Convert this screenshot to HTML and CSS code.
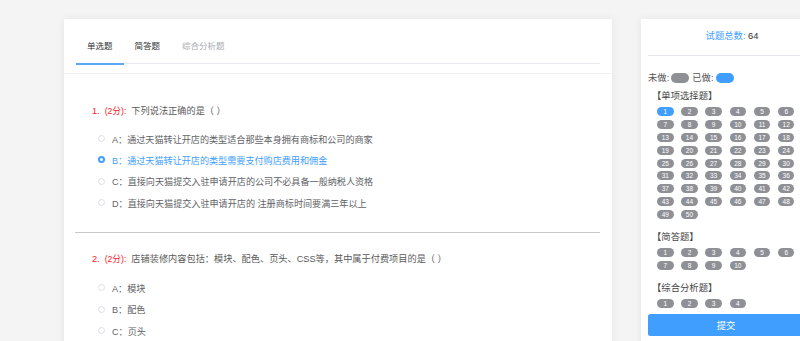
FILE: index.html
```html
<!DOCTYPE html>
<html lang="zh-CN">
<head>
<meta charset="utf-8">
<title>考试</title>
<link rel="stylesheet" href="styles.css">
</head>
<body>
<div class="page">
  <main class="paper">
    <div class="tabs-head">
      <div class="tabs-nav">
        <div class="tab active">单选题</div>
        <div class="tab">简答题</div>
        <div class="tab muted">综合分析题</div>
      </div>
    </div>

    <section class="question q1">
      <div class="q-title"><span class="q-no">1.</span><span class="q-score">(2分):</span><span class="q-text">下列说法正确的是（ ）</span></div>
      <ul class="options">
        <li class="option"><span class="radio"></span><span>A：通过天猫转让开店的类型适合那些本身拥有商标和公司的商家</span></li>
        <li class="option checked"><span class="radio"></span><span>B：通过天猫转让开店的类型需要支付购店费用和佣金</span></li>
        <li class="option"><span class="radio"></span><span>C：直接向天猫提交入驻申请开店的公司不必具备一般纳税人资格</span></li>
        <li class="option"><span class="radio"></span><span>D：直接向天猫提交入驻申请开店的 注册商标时间要满三年以上</span></li>
      </ul>
    </section>

    <hr class="divider">

    <section class="question q2">
      <div class="q-title"><span class="q-no">2.</span><span class="q-score">(2分):</span><span class="q-text">店铺装修内容包括：模块、配色、页头、CSS等，其中属于付费项目的是（ ）</span></div>
      <ul class="options">
        <li class="option"><span class="radio"></span><span>A：模块</span></li>
        <li class="option"><span class="radio"></span><span>B：配色</span></li>
        <li class="option"><span class="radio"></span><span>C：页头</span></li>
      </ul>
    </section>
  </main>

  <aside class="panel">
    <div class="panel-title"><span class="blue">试题总数:</span> 64</div>
    <div class="legend"><span>未做:</span><span class="dot grey"></span><span>已做:</span><span class="dot blue-bg"></span></div>

    <div class="group">
      <div class="group-title">【单项选择题】</div>
      <div class="pills">
        <span class="pill done">1</span><span class="pill">2</span><span class="pill">3</span><span class="pill">4</span><span class="pill">5</span><span class="pill">6</span>
        <span class="pill">7</span><span class="pill">8</span><span class="pill">9</span><span class="pill">10</span><span class="pill">11</span><span class="pill">12</span>
        <span class="pill">13</span><span class="pill">14</span><span class="pill">15</span><span class="pill">16</span><span class="pill">17</span><span class="pill">18</span>
        <span class="pill">19</span><span class="pill">20</span><span class="pill">21</span><span class="pill">22</span><span class="pill">23</span><span class="pill">24</span>
        <span class="pill">25</span><span class="pill">26</span><span class="pill">27</span><span class="pill">28</span><span class="pill">29</span><span class="pill">30</span>
        <span class="pill">31</span><span class="pill">32</span><span class="pill">33</span><span class="pill">34</span><span class="pill">35</span><span class="pill">36</span>
        <span class="pill">37</span><span class="pill">38</span><span class="pill">39</span><span class="pill">40</span><span class="pill">41</span><span class="pill">42</span>
        <span class="pill">43</span><span class="pill">44</span><span class="pill">45</span><span class="pill">46</span><span class="pill">47</span><span class="pill">48</span>
        <span class="pill">49</span><span class="pill">50</span>
      </div>
    </div>

    <div class="group">
      <div class="group-title">【简答题】</div>
      <div class="pills">
        <span class="pill">1</span><span class="pill">2</span><span class="pill">3</span><span class="pill">4</span><span class="pill">5</span><span class="pill">6</span>
        <span class="pill">7</span><span class="pill">8</span><span class="pill">9</span><span class="pill">10</span>
      </div>
    </div>

    <div class="group">
      <div class="group-title">【综合分析题】</div>
      <div class="pills">
        <span class="pill">1</span><span class="pill">2</span><span class="pill">3</span><span class="pill">4</span>
      </div>
    </div>

    <button class="submit" type="button">提交</button>
  </aside>
</div>
</body>
</html>
```

FILE: styles.css
```css
* { box-sizing: border-box; }

html, body {
  margin: 0;
  padding: 0;
  background: #f4f4f5;
  font-family: "Liberation Sans", "Noto Sans CJK SC", sans-serif;
  overflow: hidden;
}

.page {
  display: flex;
  align-items: flex-start;
  gap: 29px;
  padding: 19px 0 0 64px;
  width: 900px;
  height: 341px;
  overflow: hidden;
}

/* ---------- left paper ---------- */
.paper {
  width: 548px;
  height: 340px;
  background: #fff;
  box-shadow: 0 0 8px rgba(0, 0, 0, 0.07);
}

.tabs-head {
  padding: 0 12px;
  height: 55px;
  border-bottom: 1px solid #f1f1f4;
}

.tabs-nav {
  display: flex;
  height: 45px;
  border-bottom: 1px solid #e7e9ee;
}

.tab {
  position: relative;
  padding: 20px 11px 0;
  font-size: 8.5px;
  line-height: 14px;
  color: #303133;
  height: 45px;
}

.tab.muted { color: #a8abb2; }

.tab.active::after {
  content: "";
  position: absolute;
  left: 0;
  right: 0;
  bottom: -1px;
  height: 2px;
  background: #5ba8f6;
}

.question {
  padding-left: 28px;
}

.q1 { padding-top: 30px; }
.q2 { padding-top: 19px; }

.q-title {
  font-size: 9.2px;
  line-height: 14px;
  color: #5a5a5a;
}

.q-no, .q-score {
  color: #f5222d;
  margin-right: 5px;
}

.q-score { font-size: 8.67px; }

.options {
  list-style: none;
  margin: 10px 0 0;
  padding: 0 0 0 6px;
}

.q2 .options { margin-top: 11px; }

.option {
  display: flex;
  align-items: center;
  height: 21.33px;
  font-size: 9.1px;
  color: #606266;
}

.radio {
  width: 7px;
  height: 7px;
  border: 1px solid #dcdfe6;
  border-radius: 50%;
  margin-right: 7px;
  flex: none;
  background: #fff;
}

.option.checked { color: #409eff; }

.option.checked .radio {
  border: 2.3px solid #409eff;
  background: #fff;
}

.divider {
  margin: 19px 12px 0 11px;
  border: 0;
  border-top: 1px solid #c9c9c9;
  height: 0;
}

/* ---------- right panel ---------- */
.panel {
  width: 172px;
  height: 340px;
  background: #fff;
  box-shadow: 0 0 8px rgba(0, 0, 0, 0.07);
  padding: 0 7px;
}

.panel-title {
  text-align: center;
  font-size: 9.33px;
  line-height: 14px;
  color: #333;
  padding: 10px 0 12px 0;
  border-bottom: 1px solid #e2e4e9;
  margin-right: -10px;
}

.panel-title .blue { color: #409eff; }

.legend {
  margin-top: 17px;
  font-size: 9.33px;
  line-height: 10px;
  height: 10px;
  color: #555;
  display: flex;
  align-items: center;
}

.dot {
  display: inline-block;
  width: 18px;
  height: 9.3px;
  border-radius: 5px;
  margin: 0 3px 0 2px;
}

.dot.grey { background: #8e9095; }
.dot.blue-bg { background: #409eff; }

.group { margin-top: 7px; }
.group + .group { margin-top: 12px; }

.group-title {
  font-size: 9.33px;
  line-height: 12px;
  color: #444;
  margin-bottom: 5px;
  padding-left: 4px;
}

.pills {
  display: grid;
  grid-template-columns: repeat(6, 16.5px);
  column-gap: 7.7px;
  row-gap: 3.9px;
  padding-left: 9px;
}

.pill {
  height: 9px;
  border-radius: 4.5px;
  background: #8e9095;
  color: #fff;
  font-size: 6.5px;
  line-height: 9px;
  text-align: center;
}

.pill.done { background: #409eff; }

.submit {
  display: block;
  margin-top: 6px;
  width: 156px;
  height: 22px;
  border: 0;
  border-radius: 2.5px;
  background: #409eff;
  color: #fff;
  font-family: "Liberation Sans", "Noto Sans CJK SC", sans-serif;
  font-size: 9.33px;
  padding: 0;
}
```
